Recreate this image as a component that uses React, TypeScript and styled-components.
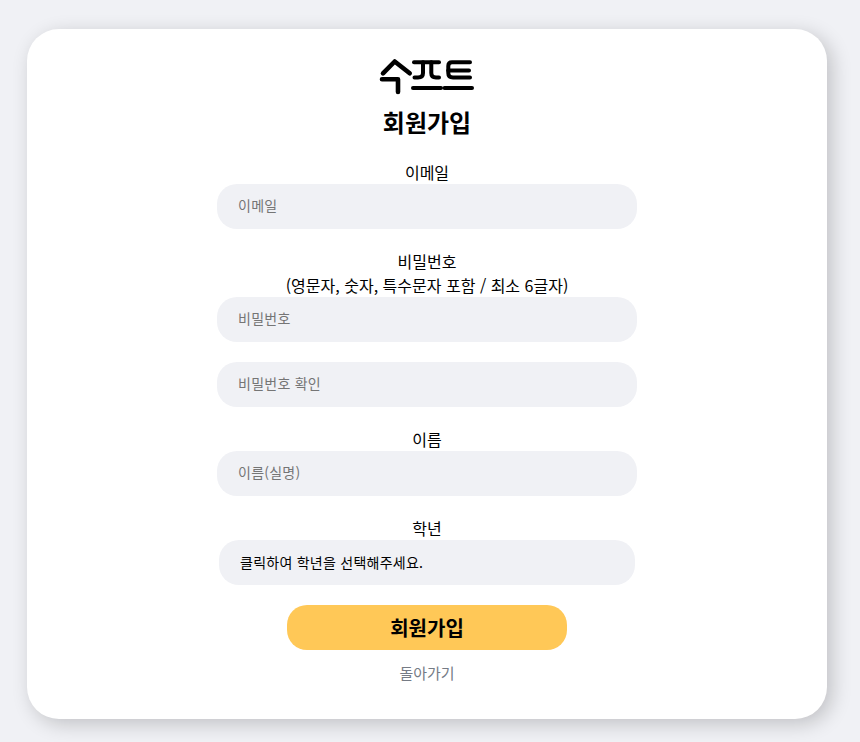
import React from "react";
import styled, { createGlobalStyle } from "styled-components";

const FONT = `"Noto Sans CJK KR", "Noto Sans", sans-serif`;

const Global = createGlobalStyle`
  html, body { margin: 0; padding: 0; background: #f0f1f5; }
  body { font-family: ${FONT}; color: #000; text-rendering: optimizeSpeed; font-kerning: none; }
  input, button { text-rendering: optimizeSpeed; font-kerning: none; }
  * { box-sizing: border-box; }
`;

const Page = styled.div`
  width: 860px;
  height: 742px;
  padding: 29px 33px 23px 27px;
  overflow: hidden;
`;

const Card = styled.main`
  width: 800px;
  height: 690px;
  background: #fff;
  border-radius: 32px;
  box-shadow: 5px 5px 20px rgba(0, 0, 0, 0.2);
  display: flex;
  flex-direction: column;
  align-items: center;
  padding-top: 20px;
`;

const LogoMark = styled.svg`
  display: block;
  width: 100px;
  height: 50px;
`;

const Title = styled.h1`
  margin: 1px 0 16px;
  font-size: 24px;
  line-height: 44px;
  font-weight: 700;
`;

const Form = styled.form`
  width: 420px;
  display: flex;
  flex-direction: column;
  align-items: center;
`;

const Field = styled.div`
  width: 100%;
  display: flex;
  flex-direction: column;
  align-items: center;
  margin-bottom: 20px;
`;

const Label = styled.label`
  font-size: 16px;
  line-height: 24px;
  text-align: center;
  white-space: nowrap;
`;

const Input = styled.input`
  width: 420px;
  height: 45px;
  border: 0;
  outline: 0;
  border-radius: 20px;
  background: #f0f1f5;
  padding: 0 21px 3px;
  font: 400 14px ${FONT};
  letter-spacing: 0.25px;
  color: #000;
  &::placeholder { color: #757575; opacity: 1; }
`;

const Select = styled.button`
  width: 416px;
  height: 45px;
  border: 0;
  border-radius: 20px;
  background: #f0f1f5;
  padding: 0 21px 2px;
  text-align: left;
  font: 400 14px ${FONT};
  letter-spacing: 0.25px;
  color: #000;
`;

const Submit = styled.button`
  width: 280px;
  height: 45px;
  border: 0;
  border-radius: 20px;
  background: #ffc857;
  font: 700 20px ${FONT};
  color: #000;
`;

const Back = styled.a`
  margin-top: 12px;
  font-size: 15px;
  line-height: 22px;
  color: #757b85;
`;

export default function App() {
  return (
    <>
      <Global />
      <Page lang="ko">
        <Card>
          <LogoMark viewBox="0 0 100 50" role="img" aria-label="수프트 로고">
            <g fill="none" stroke="#000" strokeWidth="4" strokeLinecap="round" strokeLinejoin="round">
              <path d="M6 24.3 L17.7 12.5 L32.7 24.3" strokeWidth="4.6" />
              <path d="M5 30.3 H21 V43" strokeWidth="4.6" />
              <path d="M37 13.3 H62" />
              <path d="M46 13.3 V24 Q46 28.5 41 28.5 H37.5" />
              <path d="M54.3 13.3 V24 Q54.3 28.5 59 28.5 H62" />
              <path d="M36 39 H64" />
              <path d="M67.5 39 H95" />
              <path d="M93 13.3 H75 Q71.3 13.3 71.3 17 V24 Q71.3 28.5 76 28.5 H93" />
              <path d="M71.3 21.6 H92" />
            </g>
          </LogoMark>
          <Title>회원가입</Title>
          <Form>
            <Field>
              <Label>이메일</Label>
              <Input placeholder="이메일" />
            </Field>
            <Field>
              <Label>비밀번호<br />(영문자, 숫자, 특수문자 포함 / 최소 6글자)</Label>
              <Input placeholder="비밀번호" />
            </Field>
            <Field>
              <Input placeholder="비밀번호 확인" />
            </Field>
            <Field>
              <Label>이름</Label>
              <Input placeholder="이름(실명)" />
            </Field>
            <Field>
              <Label>학년</Label>
              <Select type="button">클릭하여 학년을 선택해주세요.</Select>
            </Field>
            <Submit type="button">회원가입</Submit>
            <Back>돌아가기</Back>
          </Form>
        </Card>
      </Page>
    </>
  );
}
